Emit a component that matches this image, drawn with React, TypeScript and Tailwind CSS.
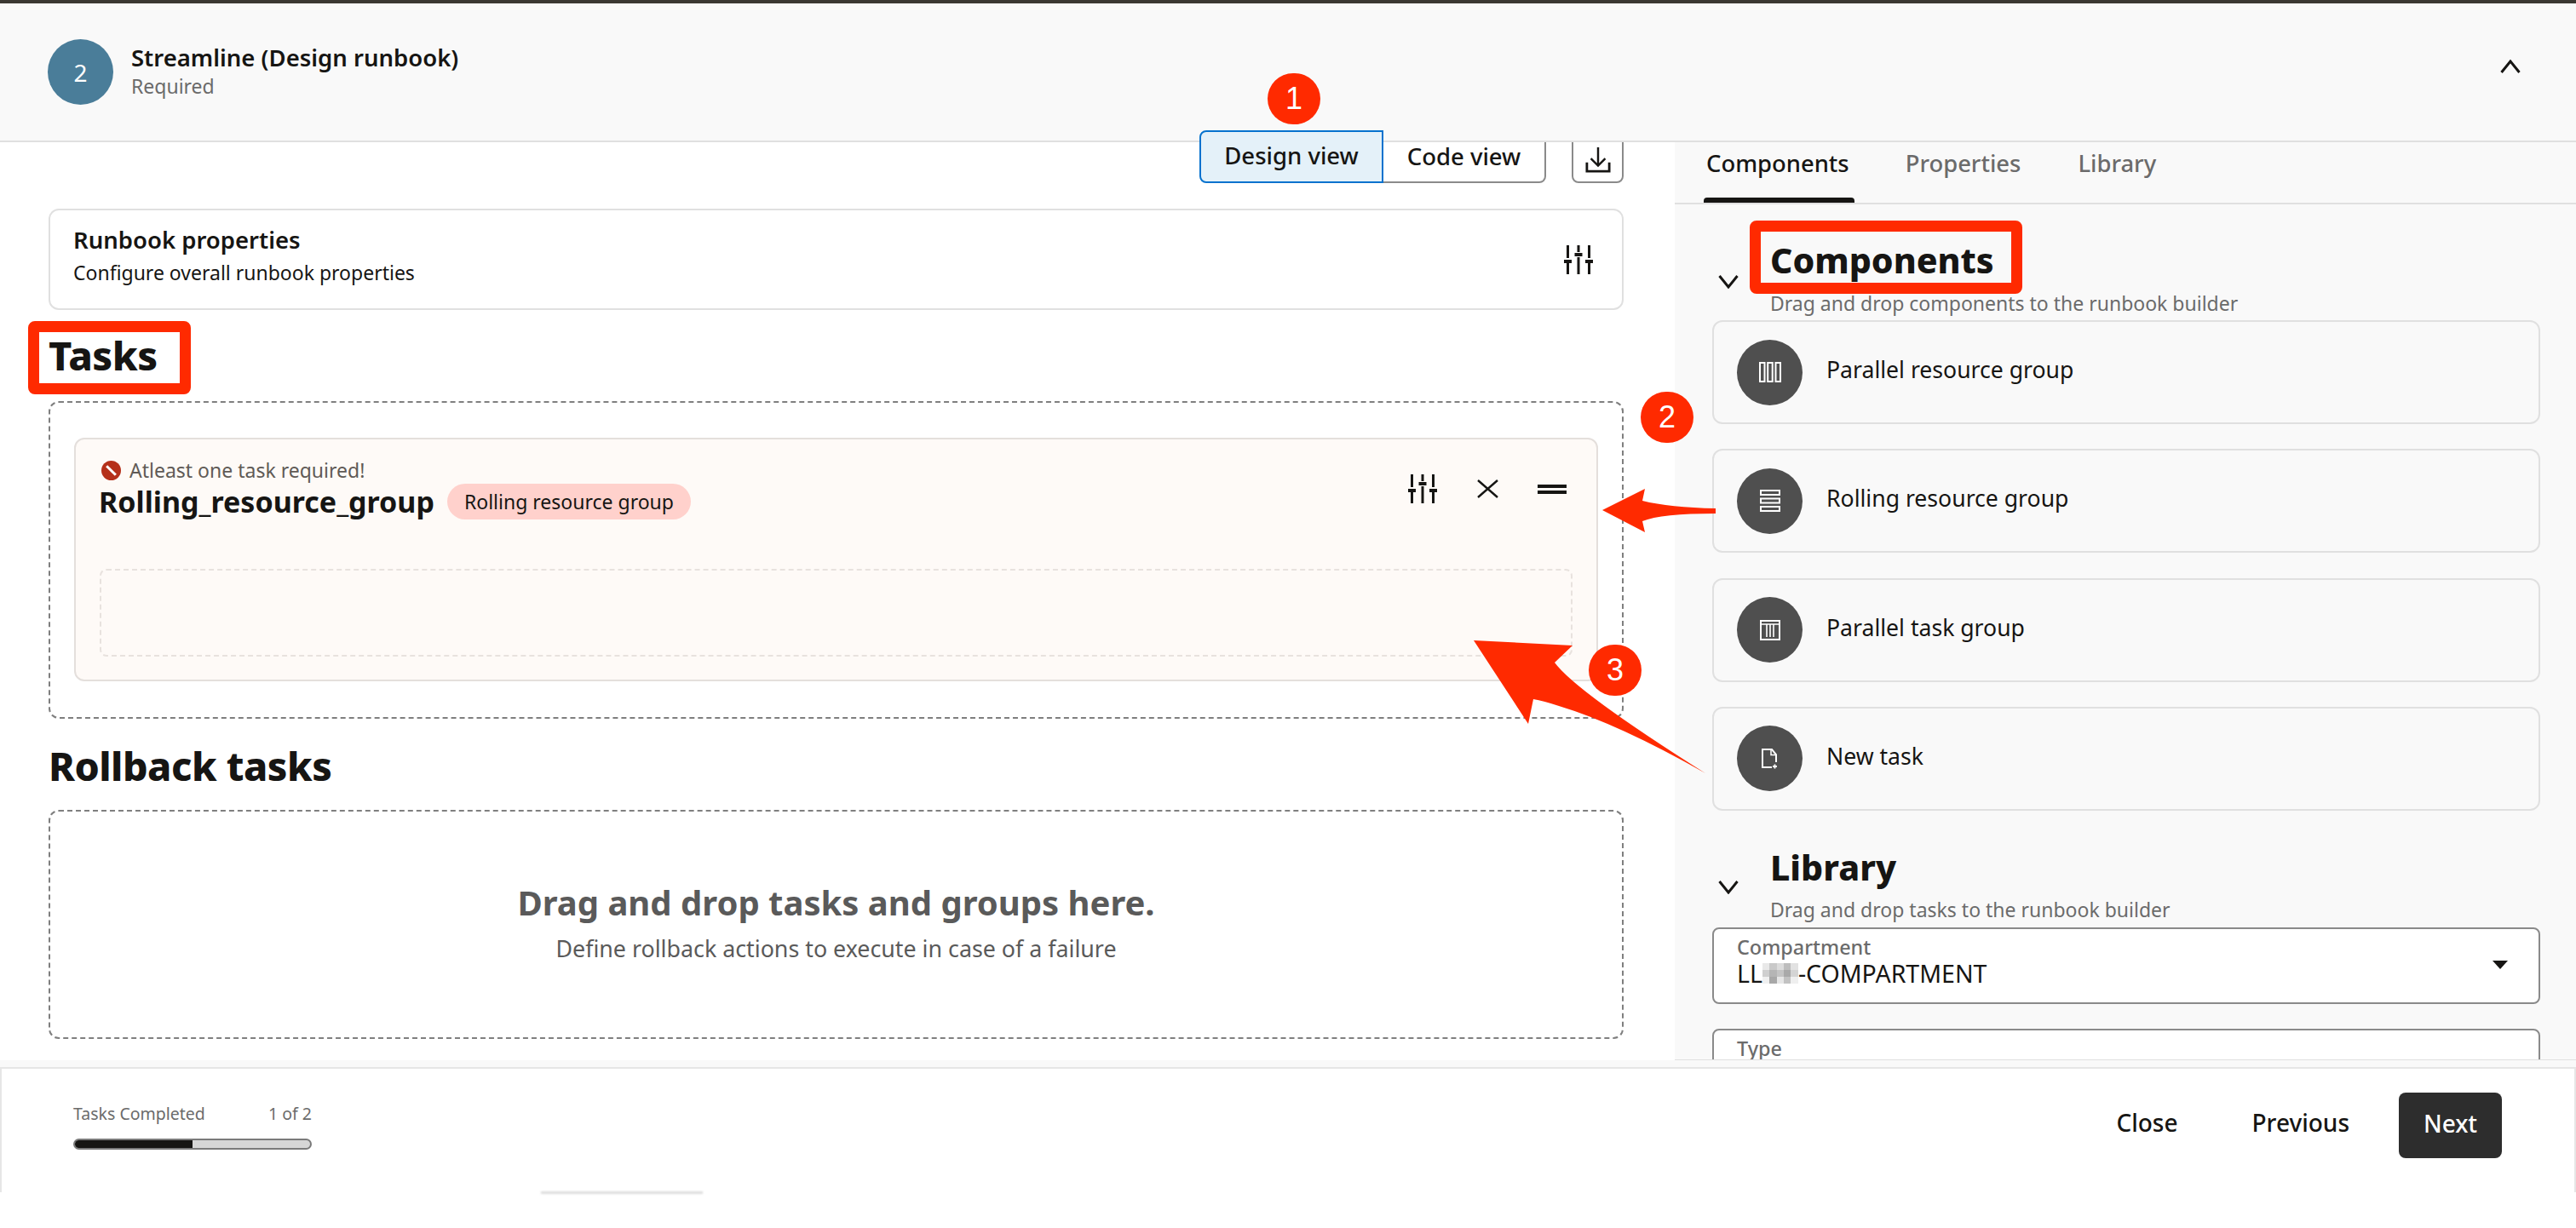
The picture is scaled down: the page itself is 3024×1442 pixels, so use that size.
function Sliders({ className }: { className?: string }) {
  return (
    <svg viewBox="0 0 34 34" className={className} fill="currentColor">
      <rect x="3" y="0" width="3" height="15" />
      <rect x="3" y="21" width="3" height="13" />
      <rect x="0" y="17" width="9" height="4" />
      <rect x="15.5" y="0" width="3" height="8" />
      <rect x="15.5" y="14" width="3" height="20" />
      <rect x="12.5" y="9" width="9" height="4" />
      <rect x="28" y="0" width="3" height="15" />
      <rect x="28" y="21" width="3" height="13" />
      <rect x="25" y="17" width="9" height="4" />
    </svg>
  );
}

function Chevron({ className, up }: { className?: string; up?: boolean }) {
  return (
    <svg viewBox="0 0 24 16" className={className} fill="none" stroke="#161513" strokeWidth="3">
      <path d={up ? 'M1.5 15L12 2l10.5 13' : 'M1.5 1L12 14 22.5 1'} />
    </svg>
  );
}

function ParallelResourceIcon() {
  return (
    <svg viewBox="0 0 26 24" className="w-[26px] h-[24px]" fill="none" stroke="white" strokeWidth="2">
      <rect x="1" y="1" width="5.5" height="22" />
      <rect x="10.2" y="1" width="5.5" height="22" />
      <rect x="19.5" y="1" width="5.5" height="22" />
    </svg>
  );
}

function RollingResourceIcon() {
  return (
    <svg viewBox="0 0 24 26" className="w-[24px] h-[26px]" fill="none" stroke="white" strokeWidth="2">
      <rect x="1" y="1" width="22" height="5" />
      <rect x="1" y="10.5" width="22" height="5" />
      <rect x="1" y="20" width="22" height="5" />
    </svg>
  );
}

function ParallelTaskIcon() {
  return (
    <svg viewBox="0 0 24 24" className="w-[24px] h-[24px]" fill="none" stroke="white" strokeWidth="2">
      <rect x="1" y="1" width="22" height="22" />
      <path d="M1 5h22M8 5v15M12 5v15M16 5v15" strokeWidth="1.6" />
    </svg>
  );
}

function NewTaskIcon() {
  return (
    <svg viewBox="0 0 20 24" className="w-[20px] h-[24px]" fill="none" stroke="white" strokeWidth="2">
      <path d="M12 22H1V1h11l5 6v9" />
      <path d="M11 1.5v6h6" strokeWidth="1.5" />
      <path d="M15.5 18.5v5M13 21h5" strokeWidth="1.8" />
    </svg>
  );
}

const components = [
  { label: 'Parallel resource group', icon: <ParallelResourceIcon /> },
  { label: 'Rolling resource group', icon: <RollingResourceIcon /> },
  { label: 'Parallel task group', icon: <ParallelTaskIcon /> },
  { label: 'New task', icon: <NewTaskIcon /> },
];

const blurCells = [
  'bg-[#e8e8e8]', 'bg-[#c9c9c9]', 'bg-[#dcdcdc]', 'bg-[#bdbdbd]', 'bg-[#e2e2e2]',
  'bg-[#cfcfcf]', 'bg-[#b5b5b5]', 'bg-[#c4c4c4]', 'bg-[#a9a9a9]', 'bg-[#d4d4d4]',
  'bg-[#f0f0f0]', 'bg-[#a8a8a8]', 'bg-[#e6e6e6]', 'bg-[#c2c2c2]', 'bg-[#efefef]',
];

function Annotations() {
  const badge =
    'absolute w-[62px] h-[60px] rounded-full bg-[#ff2a00] text-white flex items-center justify-center text-[36px] font-["Liberation_Sans",sans-serif]';
  const box = 'absolute border-[13px] border-[#ff2a00] rounded-[8px]';
  return (
    <div className="absolute inset-0 z-30 pointer-events-none">
      <div className={`${badge} left-[1488px] top-[86px]`}>1</div>
      <div className={`${badge} left-[1926px] top-[460px]`}>2</div>
      <div className={`${badge} left-[1865px] top-[757px]`}>3</div>
      <div className={`${box} left-[33px] top-[377px] w-[191px] h-[86px]`} />
      <div className={`${box} left-[2054px] top-[259px] w-[320px] h-[86px]`} />
      <svg viewBox="0 0 3024 1442" className="absolute inset-0 w-[3024px] h-[1442px]">
        <path
          d="M1881 599 L1931 574 L1928 588 Q1960 596 2014 597 L2014 603 Q1950 603 1928 612 L1931 625 Z"
          fill="#ff2a00"
        />
        <path
          d="M1730 752 L1846 758 L1825 778 Q1850 812 2002 908 Q1900 850 1830 829 Q1812 823 1800 821 L1794 850 Z"
          fill="#ff2a00"
        />
      </svg>
    </div>
  );
}

export default function App() {
  return (
    <div className="relative w-[3024px] h-[1442px] overflow-hidden bg-white flex flex-col font-['Noto_Sans',sans-serif] text-[#161513]">
      <div className="h-[4px] bg-[#3b3832] shrink-0" />

      <header className="relative z-10 h-[163px] shrink-0 bg-[#f9f9f9] border-b-2 border-[#e0e0e0] flex items-center pl-[56px] pr-[65px]">
        <div className="w-[77px] h-[77px] rounded-full bg-[#4a7d99] text-white text-[28px] flex items-center justify-center">2</div>
        <div className="ml-[21px] -mt-[4px]">
          <div className="text-[27.5px] leading-[36px] font-semibold">Streamline (Design runbook)</div>
          <div className="text-[23px] leading-[30px] text-[#6b6b6b]">Required</div>
        </div>
        <Chevron up className="ml-auto -mt-[14px] w-[24px] h-[16px]" />
      </header>

      <main className="flex flex-1 min-h-0">
        <section className="w-[1966px] shrink-0 pl-[57px] pr-[60px]">
          <div className="flex justify-end -mt-[14px]">
            <button className="relative z-20 w-[216px] h-[62px] pb-[3px] border-2 border-[#0572ce] rounded-l-[8px] bg-[#e4f1f9] text-[27.5px] font-medium">
              Design view
            </button>
            <button className="w-[191px] h-[62px] border-2 border-l-0 border-[#8a8a8a] rounded-r-[8px] bg-white text-[27.5px] font-medium">
              Code view
            </button>
            <button className="ml-[30px] w-[61px] h-[62px] border-2 border-[#8a8a8a] rounded-[8px] bg-white flex items-center justify-center">
              <svg viewBox="0 0 32 34" className="w-[30px] h-[32px] mt-[8px]" fill="none" stroke="#161513" strokeWidth="2.6">
                <path d="M16 1v22M7 15l9 9 9-9" />
                <path d="M2 20v11h28V20" strokeWidth="3" />
              </svg>
            </button>
          </div>

          <div className="mt-[30px] h-[119px] border-2 border-[#e0e0e0] rounded-[12px] pl-[27px] pr-[34px] flex items-center justify-between">
            <div className="-mt-[8px]">
              <div className="text-[27.5px] leading-[38px] font-semibold">Runbook properties</div>
              <div className="text-[23px] leading-[38px]">Configure overall runbook properties</div>
            </div>
            <Sliders className="w-[34px] h-[34px]" />
          </div>

          <h2 className="h-[107px] flex items-center text-[47px] font-extrabold tracking-[-0.5px]">Tasks</h2>

          <div className="h-[373px] border-2 border-dashed border-[#7f7f7f] rounded-[12px] px-[28px] pt-[41px]">
            <div className="h-[286px] bg-[#fefaf7] border-2 border-[#e4dfdc] rounded-[12px] px-[28px] pt-[22px]">
              <div className="flex items-start justify-between h-[105px]">
                <div>
                  <div className="flex items-center gap-[10px] h-[28px]">
                    <span className="relative w-[23px] h-[23px] ml-[2px] rounded-full bg-[#b5301a] flex items-center justify-center">
                      <span className="w-[3px] h-[15px] bg-white -rotate-45" />
                    </span>
                    <span className="text-[23px] text-[#605a56]">Atleast one task required!</span>
                  </div>
                  <div className="flex items-center gap-[15px] mt-[1px] -ml-[1px]">
                    <span className="text-[34px] leading-[44px] font-bold">Rolling_resource_group</span>
                    <span className="w-[286px] h-[42px] justify-center rounded-full bg-[#ffd1cc] text-[23px] flex items-center">Rolling resource group</span>
                  </div>
                </div>
                <div className="flex items-center mt-[19px] mr-[7px]">
                  <Sliders className="w-[34px] h-[34px]" />
                  <svg viewBox="0 0 25 22" className="ml-[47px] w-[25px] h-[22px]" fill="none" stroke="#161513" strokeWidth="2.4">
                    <path d="M1 1l23 20M24 1L1 21" />
                  </svg>
                  <div className="ml-[46px] w-[34px] h-[11px] border-y-[4px] border-[#161513]" />
                </div>
              </div>
              <div className="mt-[25px] h-[103px] border-2 border-dashed border-[#e8e2de] rounded-[8px]" />
            </div>
          </div>

          <h2 className="h-[107px] pt-[5px] flex items-center text-[46.5px] font-extrabold tracking-[-0.5px]">Rollback tasks</h2>

          <div className="h-[269px] border-2 border-dashed border-[#7f7f7f] rounded-[12px] flex flex-col items-center justify-center text-[#5a5a5a]">
            <div className="text-[40px] leading-[56px] font-bold -mt-[6px]">Drag and drop tasks and groups here.</div>
            <div className="text-[26.8px] leading-[40px] mt-[6px]">Define rollback actions to execute in case of a failure</div>
          </div>
        </section>

        <aside className="flex-1 min-w-0 h-[1079px] bg-[#f9f9f9] border-b-2 border-[#e0e0e0] overflow-hidden">
          <div className="h-[73px] border-b-2 border-[#e0e0e0] flex text-[27.4px] text-[#6b6b6b]">
            <div className="relative ml-[37px] pt-[4px] text-[#161513] font-medium">
              Components
              <div className="absolute left-[-3px] right-[-6px] bottom-0 h-[6px] bg-[#161513] rounded-t-[4px]" />
            </div>
            <div className="ml-[66px] pt-[4px] font-medium">Properties</div>
            <div className="ml-[67px] pt-[4px] font-medium">Library</div>
          </div>

          <div className="pl-[44px] pr-[42px]">
            <div className="relative pl-[68px] pt-[35px]">
              <Chevron className="absolute left-[7px] top-[83px] w-[24px] h-[16px]" />
              <h3 className="text-[41px] leading-[60px] font-extrabold">Components</h3>
              <p className="text-[23px] leading-[36px] text-[#6b6b6b] mt-[3px]">Drag and drop components to the runbook builder</p>
            </div>

            <div className="mt-[2px] flex flex-col gap-[29.3px]">
              {components.map((item) => (
                <div key={item.label} className="h-[122px] border-2 border-[#e0e0e0] rounded-[12px] flex items-center pl-[27px]">
                  <div className="w-[77px] h-[77px] rounded-full bg-[#4f4f4f] flex items-center justify-center">{item.icon}</div>
                  <span className="ml-[28px] text-[26.6px] -mt-[4px]">{item.label}</span>
                </div>
              ))}
            </div>

            <div className="relative pl-[68px] pt-[36px]">
              <Chevron className="absolute left-[7px] top-[82px] w-[24px] h-[16px]" />
              <h3 className="text-[41px] leading-[60px] font-extrabold">Library</h3>
              <p className="text-[23px] leading-[36px] text-[#6b6b6b] mt-[2px]">Drag and drop tasks to the runbook builder</p>
            </div>

            <div className="mt-[3px] relative h-[90px] bg-white border-2 border-[#8a8a8a] rounded-[8px] pl-[27px] pt-[4px]">
              <div className="text-[23.4px] leading-[34px] text-[#6b6b6b] font-medium">Compartment</div>
              <div className="flex items-center text-[28.5px] leading-[32px] -mt-[2px]">
                LL
                <span className="grid grid-cols-5 w-[42px] h-[24px]">
                  {blurCells.map((c, i) => (
                    <span key={i} className={c} />
                  ))}
                </span>
                -COMPARTMENT
              </div>
              <div className="absolute right-[36px] top-[37px] w-0 h-0 border-x-[9px] border-x-transparent border-t-[10px] border-t-[#161513]" />
            </div>

            <div className="mt-[29px] h-[90px] bg-white border-2 border-[#8a8a8a] rounded-[8px] pl-[27px] pt-[4px]">
              <div className="text-[23.4px] leading-[34px] text-[#6b6b6b] font-medium">Type</div>
            </div>
          </div>
        </aside>
      </main>

      <div className="absolute left-0 right-0 top-[1245px] h-[9px] bg-[#f9f9f9]" />

      <footer className="absolute left-0 right-0 top-[1253px] h-[147px] bg-white border-t-2 border-x-2 border-[#e6e6e6] flex items-center pl-[84px] pr-[85px]">
        <div className="w-[280px] -mt-[12px]">
          <div className="flex justify-between text-[19.5px] leading-[28px] text-[#6b6b6b]">
            <span>Tasks Completed</span>
            <span>1 of 2</span>
          </div>
          <div className="mt-[15px] h-[13px] rounded-full border-2 border-[#7a7a7a] bg-[#d6d6d6] overflow-hidden">
            <div className="h-full w-1/2 bg-[#161513]" />
          </div>
        </div>
        <div className="ml-auto flex items-center -mt-[12px]">
          <button className="pb-[8px] text-[28px] font-medium">Close</button>
          <button className="ml-[87px] pb-[8px] text-[28px] font-medium">Previous</button>
          <button className="ml-[58px] w-[121px] h-[77px] pb-[6px] rounded-[8px] bg-[#2d2d2d] text-white text-[28px] font-medium">Next</button>
        </div>
      </footer>
      <div className="absolute left-[635px] top-[1399px] w-[190px] h-[3px] bg-[#dcdcdc] blur-[1px]" />

      <Annotations />
    </div>
  );
}
